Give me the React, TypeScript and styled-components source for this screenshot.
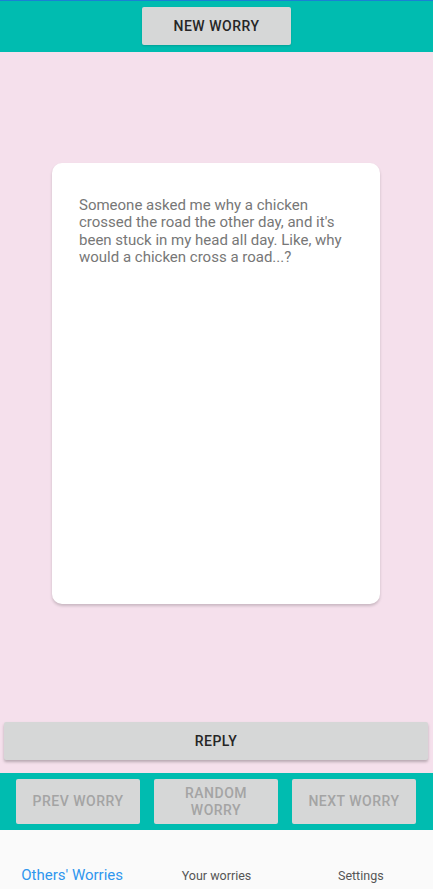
import React from "react";
import styled, { createGlobalStyle } from "styled-components";

const Global = createGlobalStyle`
  html, body { margin: 0; padding: 0; }
  body { font-family: Roboto, "Noto Sans", sans-serif; background: #f5e0ec; }
  * { box-sizing: border-box; }
`;

const Screen = styled.div`
  width: 433px;
  height: 889px;
  display: flex;
  flex-direction: column;
  background: #f5e0ec;
  overflow: hidden;
`;

const Header = styled.header`
  height: 52px;
  background: #00bcb0;
  border-top: 1px solid #1a80d4;
  display: flex;
  justify-content: center;
  align-items: flex-start;
  padding-top: 6px;
`;

const GreyButton = styled.button<{ $disabled?: boolean }>`
  font-family: Roboto, "Noto Sans", sans-serif;
  font-size: 14px;
  font-weight: 500;
  letter-spacing: 0.5px;
  text-transform: uppercase;
  background: #d6d7d7;
  color: ${(p) => (p.$disabled ? "#a4a4a4" : "#262626")};
  border: none;
  border-radius: 2px;
  padding: 0;
  line-height: 17px;
`;

const NewButton = styled(GreyButton)`
  width: 149px;
  height: 38px;
  box-shadow: 0 1px 2px rgba(0, 0, 0, 0.15);
`;

const Main = styled.main`
  flex: 1;
  display: flex;
  flex-direction: column;
  align-items: center;
  padding-top: 111px;
`;

const Card = styled.div`
  width: 328px;
  height: 441px;
  margin-right: 1px;
  background: #ffffff;
  border-radius: 10px;
  box-shadow: 0 2px 3px rgba(0, 0, 0, 0.18);
  padding: 34px 24px 0 27px;
`;

const WorryText = styled.p`
  margin: 0;
  font-size: 15px;
  line-height: 17.4px;
  color: #777777;
`;

const ReplyButton = styled(GreyButton)`
  width: 424px;
  height: 38px;
  margin-top: 118px;
  margin-right: 1px;
  box-shadow: 0 2px 3px rgba(0, 0, 0, 0.25);
`;

const Band = styled.div`
  height: 57px;
  margin-top: 13px;
  background: #00bcb0;
  display: flex;
  justify-content: center;
  gap: 14px;
  padding-top: 6px;
  padding-right: 1px;
`;

const NavButton = styled(GreyButton)`
  width: 124px;
  height: 45px;
  padding: 0 10px;
`;

const TabBar = styled.nav`
  flex: 1;
  background: #fafafa;
  display: grid;
  grid-template-columns: repeat(3, 1fr);
  align-items: last baseline;
  align-content: end;
  padding-bottom: 5px;
`;

const Tab = styled.div<{ $active?: boolean }>`
  text-align: center;
  font-size: ${(p) => (p.$active ? "15px" : "12.5px")};
  color: ${(p) => (p.$active ? "#2f96ee" : "#555555")};
`;

export default function App() {
  return (
    <Screen>
      <Global />
      <Header>
        <NewButton>New Worry</NewButton>
      </Header>
      <Main>
        <Card>
          <WorryText>
            Someone asked me why a chicken crossed the road the other day, and it's been stuck in my head all day. Like, why would a chicken cross a road...?
          </WorryText>
        </Card>
        <ReplyButton>Reply</ReplyButton>
      </Main>
      <Band>
        <NavButton $disabled>Prev Worry</NavButton>
        <NavButton $disabled>Random Worry</NavButton>
        <NavButton $disabled>Next Worry</NavButton>
      </Band>
      <TabBar>
        <Tab $active>Others' Worries</Tab>
        <Tab>Your worries</Tab>
        <Tab>Settings</Tab>
      </TabBar>
    </Screen>
  );
}
